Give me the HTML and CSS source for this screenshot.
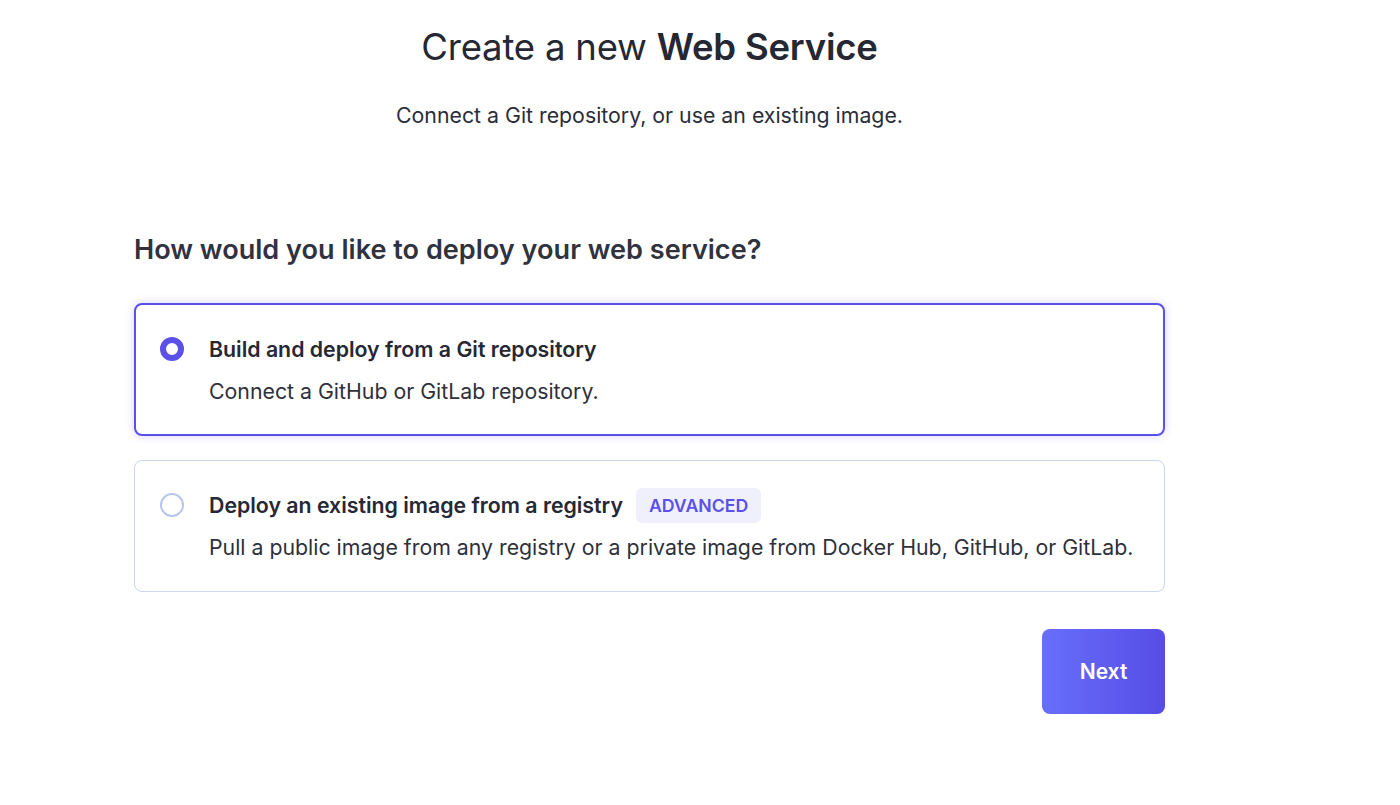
FILE: index.html
```html
<!DOCTYPE html>
<html lang="en">
<head>
    <meta charset="UTF-8">
    <meta name="viewport" content="width=device-width, initial-scale=1.0">
    <title>Create a new Web Service</title>
    <link rel="stylesheet" href="styles.css">
</head>
<body>
    <div class="container">
        <header class="page-header">
            <h1>Create a new <strong>Web Service</strong></h1>
            <p>Connect a Git repository, or use an existing image.</p>
        </header>

        <h2>How would you like to deploy your web service?</h2>

        <div class="options">
            <label class="option selected">
                <span class="radio"></span>
                <span class="option-body">
                    <span class="option-title">Build and deploy from a Git repository</span>
                    <span class="option-desc">Connect a GitHub or GitLab repository.</span>
                </span>
            </label>
            <label class="option">
                <span class="radio"></span>
                <span class="option-body">
                    <span class="option-title">Deploy an existing image from a registry <span class="badge">ADVANCED</span></span>
                    <span class="option-desc">Pull a public image from any registry or a private image from Docker Hub, GitHub, or GitLab.</span>
                </span>
            </label>
        </div>

        <div class="actions">
            <button class="next">Next</button>
        </div>
    </div>
</body>
</html>
```

FILE: styles.css
```css
body {
    font-family: Inter, "Noto Sans", sans-serif;
    background: #fff;
    color: #2a2d3a;
    margin: 0;
    padding: 0;
}

.container {
    width: 1031px;
    margin-left: 134px;
}

.page-header {
    text-align: center;
    padding-top: 24px;
}

h1 {
    font-size: 36.5px;
    font-weight: 400;
    margin: 0;
    line-height: 46px;
    color: #252733;
    letter-spacing: -0.2px;
}

h1 strong {
    font-weight: 600;
}

.page-header p {
    font-size: 21.3px;
    margin: 31px 0 0;
    line-height: 28px;
    color: #2a2d3a;
}

h2 {
    font-size: 27.1px;
    font-weight: 600;
    color: #30333f;
    margin: 104px 0 0;
    line-height: 34px;
}

.options {
    display: flex;
    flex-direction: column;
    gap: 24px;
    margin-top: 36px;
}

.option {
    display: flex;
    align-items: flex-start;
    gap: 25px;
    padding: 30px 24px 30px 25px;
    border: 1px solid #cbd5ee;
    border-radius: 8px;
    cursor: pointer;
}

.option.selected {
    border: 2px solid #5b50e8;
    padding: 30px 24px 29px 24px;
    box-shadow: 0 0 8px rgba(91, 80, 232, 0.25);
}

.radio {
    flex: none;
    box-sizing: border-box;
    width: 24px;
    height: 24px;
    border-radius: 50%;
    border: 2px solid #b6c6ea;
    margin-top: 2px;
}

.selected .radio {
    border: 6px solid #5b50e8;
}

.option-body {
    display: flex;
    flex-direction: column;
    gap: 14px;
}

.option-title {
    display: flex;
    align-items: center;
    gap: 13px;
    font-size: 21.3px;
    font-weight: 600;
    line-height: 28px;
    color: #262834;
}

.option-desc {
    font-size: 21.3px;
    line-height: 28px;
    color: #2e303b;
}

.badge {
    background: #f0f0fd;
    color: #5b50e8;
    font-size: 17.7px;
    font-weight: 600;
    padding: 0 13px;
    line-height: 35px;
    border-radius: 6px;
    margin: -4px 0;
}

.actions {
    display: flex;
    justify-content: flex-end;
    margin-top: 37px;
}

.next {
    width: 123px;
    height: 85px;
    border: none;
    border-radius: 8px;
    background: linear-gradient(90deg, #676ffa, #574ce6);
    color: #fff;
    font-family: inherit;
    font-size: 21px;
    font-weight: 600;
    cursor: pointer;
}
```
